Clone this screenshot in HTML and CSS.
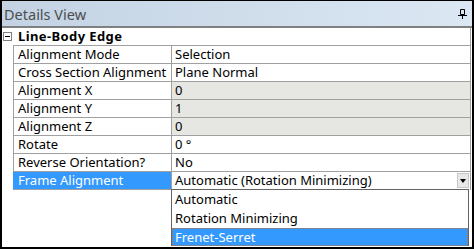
FILE: index.html
```html
<!DOCTYPE html>
<html>
	<head>
		<meta charset="UTF-8">
		<title>Details View</title>
		<link rel="stylesheet" href="styles.css">
	</head>
	<body>
		<div class="details-panel">
			<div class="details-title">
				<span class="details-caption">Details View</span>
				<svg class="details-pin" width="9" height="10" viewBox="0 0 9 10">
					<path d="M2.5 0.5h4v5h-4z" fill="none" stroke="#000"/>
					<path d="M0 6.5h9" stroke="#000"/>
					<path d="M4.5 6v4" stroke="#000"/>
				</svg>
			</div>
			<div class="details-grid">
				<div class="grid-row grid-head">
					<div class="grid-gutter"><span class="grid-toggle"></span></div>
					<div class="grid-headtext">Line-Body Edge</div>
				</div>
				<div class="grid-row">
					<div class="grid-gutter"></div>
					<div class="grid-label">Alignment Mode</div>
					<div class="grid-value">Selection</div>
				</div>
				<div class="grid-row">
					<div class="grid-gutter"></div>
					<div class="grid-label">Cross Section Alignment</div>
					<div class="grid-value">Plane Normal</div>
				</div>
				<div class="grid-row">
					<div class="grid-gutter"></div>
					<div class="grid-label">Alignment X</div>
					<div class="grid-value grid-readonly">0</div>
				</div>
				<div class="grid-row">
					<div class="grid-gutter"></div>
					<div class="grid-label">Alignment Y</div>
					<div class="grid-value grid-readonly">1</div>
				</div>
				<div class="grid-row">
					<div class="grid-gutter"></div>
					<div class="grid-label">Alignment Z</div>
					<div class="grid-value grid-readonly">0</div>
				</div>
				<div class="grid-row">
					<div class="grid-gutter"></div>
					<div class="grid-label">Rotate</div>
					<div class="grid-value">0 °</div>
				</div>
				<div class="grid-row">
					<div class="grid-gutter"></div>
					<div class="grid-label">Reverse Orientation?</div>
					<div class="grid-value">No</div>
				</div>
				<div class="grid-row grid-active">
					<div class="grid-gutter"></div>
					<div class="grid-label">Frame Alignment</div>
					<div class="grid-value grid-combo">
						<span>Automatic (Rotation Minimizing)</span>
						<span class="combo-button"></span>
						<!--dropdown list-->
						<div class="combo-list">
							<div class="combo-item">Automatic</div>
							<div class="combo-item">Rotation Minimizing</div>
							<div class="combo-item combo-selected">Frenet-Serret</div>
						</div>
					</div>
				</div>
			</div>
		</div>
	</body>
</html>
```

FILE: styles.css
```css
*{
	margin:0;
	padding:0;
	box-sizing:border-box;
}
html,body{
	width:100%;
	height:100%;
	overflow:hidden;
	background:#fff;
}
body{
	font-family:"Noto Sans","Open Sans",sans-serif;
	font-size:13px;
	color:#000;
}
.details-panel{
	width:474px;
	height:249px;
	border:2px solid #000;
	border-top-width:1px;
	display:flex;
	flex-direction:column;
}
.details-title{
	height:27px;
	flex-shrink:0;
	display:flex;
	align-items:center;
	justify-content:space-between;
	padding:0 5px 0 2px;
	background:linear-gradient(to right,#c3d3e3,#dbe7f3);
	border-bottom:2px solid #808080;
}
.details-caption{
	font-size:14.5px;
	color:#4d4d4d;
}
.details-pin{
	display:block;
	margin-top:1px;
}
.details-grid{
	flex:1;
	display:flex;
	flex-direction:column;
	padding-right:1px;
}
.grid-row{
	display:flex;
	height:18px;
	line-height:17px;
}
.grid-gutter{
	width:11px;
	flex-shrink:0;
	position:relative;
}
.grid-toggle{
	position:absolute;
	left:1px;
	top:4px;
	width:9px;
	height:9px;
	border:1px solid #808080;
	background:#fff;
}
.grid-toggle:after{
	content:"";
	position:absolute;
	left:1px;
	top:3px;
	width:5px;
	height:1px;
	background:#000;
}
.grid-headtext{
	flex:1;
	padding-left:5px;
	font-weight:bold;
	letter-spacing:0.4px;
	border-bottom:1px solid #a0a0a0;
	border-right:1px solid #a0a0a0;
}
.grid-label{
	width:158px;
	flex-shrink:0;
	padding-left:4px;
	border-left:1px solid #a0a0a0;
	border-bottom:1px solid #a0a0a0;
	white-space:nowrap;
	overflow:hidden;
}
.grid-value{
	flex:1;
	padding-left:3px;
	border-left:1px solid #a0a0a0;
	border-right:1px solid #a0a0a0;
	border-bottom:1px solid #a0a0a0;
	white-space:nowrap;
}
.grid-readonly{
	background:#e6e6e3;
}
.grid-active .grid-label{
	background:#3399ff;
	color:#fff;
	border-left-color:#3399ff;
}
.grid-combo{
	position:relative;
	border-bottom:none;
}
.combo-button{
	position:absolute;
	right:1px;
	top:1px;
	width:12px;
	height:15px;
	background:#e8e8e8;
	border:1px solid #c8c8c8;
}
.combo-button:after{
	content:"";
	position:absolute;
	left:2px;
	top:5px;
	border-left:3px solid transparent;
	border-right:3px solid transparent;
	border-top:4px solid #000;
}
.combo-list{
	position:absolute;
	left:-1px;
	top:17px;
	width:298px;
	height:57px;
	background:#fff;
	border:1px solid #646464;
	z-index:2;
}
.combo-item{
	height:19px;
	line-height:18px;
	padding-left:3px;
}
.combo-selected{
	height:18px;
	line-height:16px;
	background:#3399ff;
	color:#fff;
	border:1px dotted #c07030;
	padding-left:2px;
}
```
